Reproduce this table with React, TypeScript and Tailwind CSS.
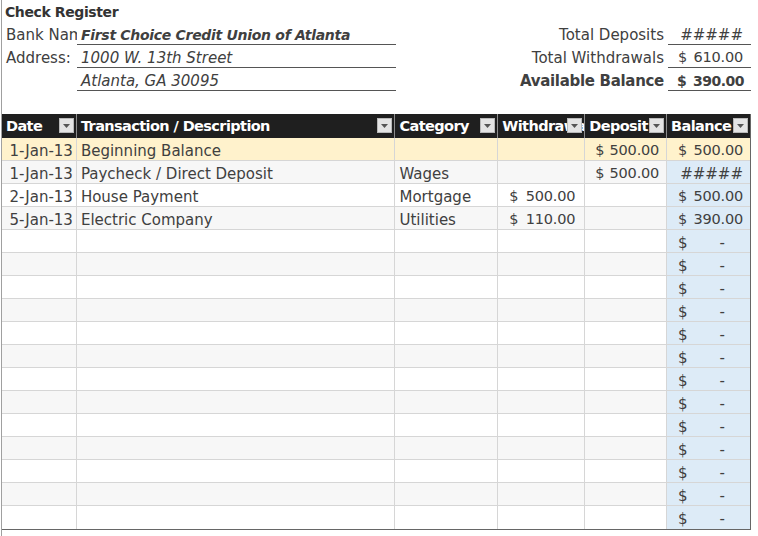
import React from "react"

type Row = {
  date: string
  desc: string
  cat: string
  w: string
  d: string
  bal: string
}

const filled: Row[] = [
  { date: "1-Jan-13", desc: "Beginning Balance", cat: "", w: "", d: "500.00", bal: "500.00" },
  { date: "1-Jan-13", desc: "Paycheck / Direct Deposit", cat: "Wages", w: "", d: "500.00", bal: "#####" },
  { date: "2-Jan-13", desc: "House Payment", cat: "Mortgage", w: "500.00", d: "", bal: "500.00" },
  { date: "5-Jan-13", desc: "Electric Company", cat: "Utilities", w: "110.00", d: "", bal: "390.00" },
]

const rows: Row[] = [
  ...filled,
  ...Array.from({ length: 13 }, () => ({ date: "", desc: "", cat: "", w: "", d: "", bal: "-" })),
]

function Money({ value, pl, pr }: { value: string; pl: string; pr: string }) {
  if (!value) return null
  if (value === "#####") {
    return <div className={`flex h-full items-center justify-end pt-[4px] ${pr}`}>#####</div>
  }
  if (value === "-") {
    return (
      <div className={`flex h-full items-center justify-between pt-[4px] ${pl} pr-[25px]`}>
        <span>$</span>
        <span>-</span>
      </div>
    )
  }
  return (
    <div className={`flex h-full items-center justify-between pt-[4px] text-[14.5px] tracking-[-0.2px] ${pl} ${pr}`}>
      <span>$</span>
      <span>{value}</span>
    </div>
  )
}

function FilterButton() {
  return (
    <span className="absolute right-[2px] top-[4px] flex h-[15px] w-[15px] items-center justify-center border border-[#b8b8b8] bg-[#e4e4e4]">
      <svg width="7" height="4" viewBox="0 0 7 4">
        <path d="M0 0h7L3.5 4z" fill="#555" />
      </svg>
    </span>
  )
}

function HeaderCell({ label, width, last }: { label: string; width: string; last?: boolean }) {
  return (
    <div
      className={`relative flex h-full items-center overflow-hidden whitespace-nowrap pl-[4px] pt-[2px] text-[14.5px] font-bold tracking-[-0.6px] text-white ${width} ${
        last ? "" : "border-r border-[#8c8c8c]"
      }`}
    >
      {label}
      <FilterButton />
    </div>
  )
}

export default function App() {
  return (
    <div className="relative ml-[1px] h-[536px] w-[757px] overflow-hidden border-l border-[#a0a0a0] bg-white font-['DejaVu_Sans',sans-serif] text-[15px] text-[#404040]">
      {/* Title */}
      <div className="flex h-[22px] items-center pl-[3px] pt-[2px] text-[14px] font-bold tracking-[-0.4px] text-[#333]">
        Check Register
      </div>

      {/* Bank info + totals */}
      <div className="flex h-[23px]">
        <div className="flex w-[75px] items-center overflow-hidden whitespace-nowrap pl-[4px] pt-[4px]">Bank Name:</div>
        <div className="flex w-[319px] items-center border-b border-[#555] pl-[4px] pt-[4px] text-[14px] font-bold italic tracking-[-0.3px]">
          First Choice Credit Union of Atlanta
        </div>
        <div className="flex w-[272px] items-center justify-end pr-[4px] pt-[4px]">Total Deposits</div>
        <div className="flex w-[83px] items-center justify-end border-b border-[#555] pr-[8px] pt-[4px]">#####</div>
      </div>
      <div className="flex h-[23px]">
        <div className="flex w-[75px] items-center pl-[4px] pt-[4px]">Address:</div>
        <div className="flex w-[319px] items-center border-b border-[#555] pl-[4px] pt-[4px] italic">1000 W. 13th Street</div>
        <div className="flex w-[272px] items-center justify-end pr-[4px] pt-[4px]">Total Withdrawals</div>
        <div className="flex w-[83px] items-center justify-between border-b border-[#555] pl-[10px] pr-[8px] pt-[4px] text-[14.5px] tracking-[-0.2px]">
          <span>$</span>
          <span>610.00</span>
        </div>
      </div>
      <div className="flex h-[23px]">
        <div className="w-[75px]" />
        <div className="flex w-[319px] items-center border-b border-[#555] pl-[4px] pt-[4px] italic">Atlanta, GA 30095</div>
        <div className="flex w-[272px] items-center justify-end pr-[4px] pt-[4px] font-bold tracking-[-0.3px]">
          Available Balance
        </div>
        <div className="flex w-[83px] items-center justify-between border-b border-[#555] pl-[9px] pr-[7px] pt-[4px] text-[14px] font-bold tracking-[-0.5px]">
          <span>$</span>
          <span>390.00</span>
        </div>
      </div>
      <div className="h-[23px]" />

      {/* Table */}
      <div className="w-[749px] border-r border-b border-[#666]">
        <div className="flex h-[24px] bg-[#1f1f1f]">
          <HeaderCell label="Date" width="w-[75px]" />
          <HeaderCell label="Transaction / Description" width="w-[319px]" />
          <HeaderCell label="Category" width="w-[103px]" />
          <HeaderCell label="Withdrawal" width="w-[87px]" />
          <HeaderCell label="Deposit" width="w-[82px]" />
          <HeaderCell label="Balance" width="w-[83px]" last />
        </div>
        {rows.map((r, i) => {
          const bg = i === 0 ? "bg-[#fff2cc]" : i % 2 === 1 ? "bg-[#f7f7f7]" : "bg-white"
          const balBg = i === 0 ? "bg-[#fff2cc]" : "bg-[#ddebf7]"
          return (
            <div key={i} className={`flex h-[23px] border-b border-[#d6d6d6] last:border-b-0 ${bg}`}>
              <div className="flex w-[75px] items-center justify-end whitespace-nowrap border-r border-[#d6d6d6] pr-[3px] pt-[4px]">
                {r.date}
              </div>
              <div className="flex w-[319px] items-center whitespace-nowrap border-r border-[#d6d6d6] pl-[4px] pt-[4px]">
                {r.desc}
              </div>
              <div className="flex w-[103px] items-center whitespace-nowrap border-r border-[#d6d6d6] pl-[4px] pt-[4px]">
                {r.cat}
              </div>
              <div className="w-[87px] whitespace-nowrap border-r border-[#d6d6d6]">
                <Money value={r.w} pl="pl-[11px]" pr="pr-[9px]" />
              </div>
              <div className="w-[82px] whitespace-nowrap border-r border-[#d6d6d6]">
                <Money value={r.d} pl="pl-[10px]" pr="pr-[7px]" />
              </div>
              <div className={`w-[83px] whitespace-nowrap ${balBg}`}>
                <Money value={r.bal} pl="pl-[11px]" pr="pr-[7px]" />
              </div>
            </div>
          )
        })}
      </div>
    </div>
  )
}
